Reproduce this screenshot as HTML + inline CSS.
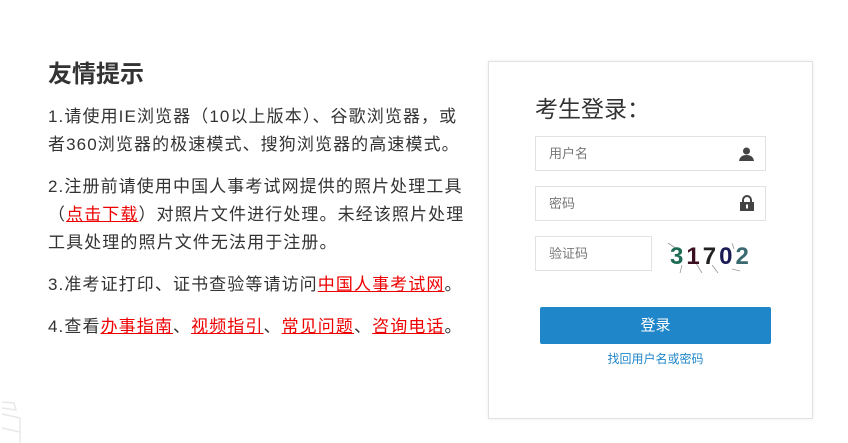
<!DOCTYPE html>
<html><head><meta charset="utf-8"><style>
body{margin:0;width:848px;height:443px;background:#fff;font-family:"Liberation Sans","Noto Sans CJK SC",sans-serif;position:relative;overflow:hidden}
.l{position:absolute;left:48px;top:58px;width:440px;color:#333;font-size:17px;line-height:28px;white-space:nowrap}
h1{font-size:24px;margin:0 0 11px;line-height:34px;color:#333}
p{margin:0 0 14px;letter-spacing:1.1px}
a{color:#e00;text-decoration:underline}
.box{position:absolute;left:488px;top:61px;width:323px;height:356px;border:1px solid #e2e2e2;box-shadow:0 0 4px #eee}
.t{position:absolute;left:535px;top:90px;font-size:23px;color:#333}
.in{position:absolute;left:535px;width:229px;height:33px;border:1px solid #e2e2e2;font-size:13px;color:#777;line-height:33px;text-indent:13px;box-sizing:content-box}
.btn{position:absolute;left:540px;top:307px;width:231px;height:37px;background:#1f86c9;color:#fff;font-size:15px;text-align:center;line-height:37px;border-radius:2px}
.fg{position:absolute;left:540px;width:231px;top:350px;text-align:center;font-size:12px;color:#1f86c9}
</style></head><body>
<div class="l">
<h1>友情提示</h1>
<p>1.请使用IE浏览器（10以上版本）、谷歌浏览器，或<br>者360浏览器的极速模式、搜狗浏览器的高速模式。</p>
<p>2.注册前请使用中国人事考试网提供的照片处理工具<br>（<a>点击下载</a>）对照片文件进行处理。未经该照片处理<br>工具处理的照片文件无法用于注册。</p>
<p>3.准考证打印、证书查验等请访问<a>中国人事考试网</a>。</p>
<p>4.查看<a>办事指南</a>、<a>视频指引</a>、<a>常见问题</a>、<a>咨询电话</a>。</p>
</div>
<div class="box"></div>
<div class="t">考生登录：</div>
<div class="in" style="top:136px">用户名
<svg style="position:absolute;right:11px;top:10px" width="15" height="14" viewBox="0 0 15 14"><circle cx="7.5" cy="4" r="3.5" fill="#444"/><path d="M0 14 Q1 8 7.5 8 Q14 8 15 14Z" fill="#444"/></svg></div>
<div class="in" style="top:186px">密码
<svg style="position:absolute;right:11px;top:8px" width="14" height="16" viewBox="0 0 14 16"><path d="M3 7V5a4 4 0 0 1 8 0v2" stroke="#444" stroke-width="2" fill="none"/><rect x="0" y="7" width="14" height="9" fill="#444"/><rect x="6" y="9.5" width="2" height="4" fill="#fff"/></svg></div>
<div class="in" style="top:236px;width:115px">验证码</div>
<svg style="position:absolute;left:666px;top:241px" width="90" height="32"><g stroke="#999" stroke-width="0.8"><path d="M2 2 L14 10 M16 24 L14 32 M30 22 L36 32 M46 24 L52 32 M66 2 L68 8 M66 28 L74 30"/></g></svg>
<div style="position:absolute;left:670px;top:240px;width:90px;height:33px;font:bold 24px 'Liberation Sans',sans-serif;letter-spacing:3px;line-height:33px"><span style="color:#1b6b55">3</span><span style="color:#3a1020">1</span><span style="color:#222">7</span><span style="color:#1a1a55">0</span><span style="color:#3a6a70">2</span></div>
<div class="btn">登录</div>
<div class="fg">找回用户名或密码</div>
<svg style="position:absolute;left:0;top:396px" width="30" height="47"><path d="M2 6 L14 7 L16 14 L2 12 M2 18 L20 22 L20 47 M2 32 L20 36" stroke="#e8e8e8" stroke-width="1.5" fill="none"/></svg>
</body></html>
